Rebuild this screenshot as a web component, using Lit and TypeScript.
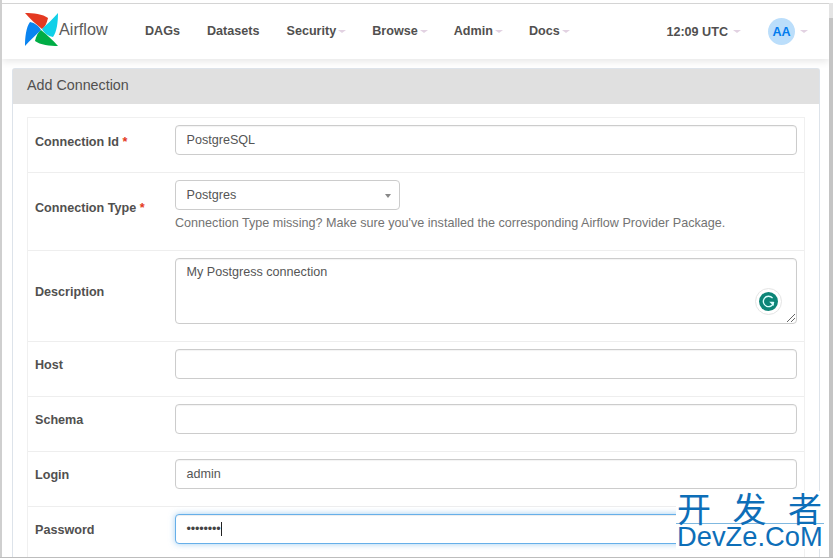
import { LitElement, html, css, svg } from "lit";
import { customElement } from "lit/decorators.js";

const Row = (label: string, req: boolean, body: unknown, cls: string) => html`
  <div class="row ${cls}">
    <div class="lab">${label}${req ? html`<span class="req"> *</span>` : ""}</div>
    <div class="val">${body}</div>
  </div>`;

const Caret = () => html`<span class="caret"></span>`;

@customElement("app-root")
export class AppRoot extends LitElement {
  static styles = css`
    :host { display: block; width: 833px; height: 558px; overflow: hidden; position: relative; background: #fff;
      font-family: "Liberation Sans", Arial, sans-serif; color: #51504f; font-size: 12.6px; }
    * { box-sizing: border-box; }
    .frame { height: 558px; padding: 3px 4px 1px 0; background: #fff; border-left: 2px solid #cfcfcf; display: flex; flex-direction: column; }
    .shell { flex: 1; min-height: 0; border-top: 1px solid #d4d4d4; overflow: hidden; }
    .nav { height: 55px; display: flex; align-items: center; background: #fff; padding-left: 23px; box-shadow: 0 3px 7px rgba(0,0,0,.09); position: relative; z-index: 1; }
    .logo { display: flex; align-items: center; width: 120px; padding-bottom: 4px; }
    .logo svg { display: block; }
    .logo span { font-size: 16.2px; color: #5c5b5a; margin-left: 1px; }
    .menu { display: flex; gap: 27px; font-weight: 700; font-size: 12.6px; color: #51504f; padding-bottom: 2px; }
    .menu div { display: flex; align-items: center; }
    .menu .caret { margin-right: -1px; margin-top: 2px; }
    .caret { display: inline-block; width: 0; height: 0; border-left: 4px solid transparent; border-right: 4px solid transparent; border-top: 3px solid #e2d2e2; margin-left: 2px; }
    .right { display: flex; align-items: center; margin-left: auto; font-weight: 700; font-size: 12.6px; padding-right: 21px; }
    .right .caret { margin-left: 5px; }
    .avatar { width: 27px; height: 27px; border-radius: 50%; background: #bbdefb; color: #017cee; font-size: 12.6px; display: flex; align-items: center; justify-content: center; margin-left: 27px; }
    .right .avatar + .caret { margin-left: 5px; }
    .page { padding: 9px 0 0 10px; background: #fff; }
    .panel { width: 808px; border: 1px solid #dde3ea; border-bottom: 0; border-radius: 3px 3px 0 0; }
    .head { height: 35px; background: #e0e0e0; display: flex; align-items: center; padding: 0 0 3px 14px; font-size: 14.3px; color: #51504f; }
    .table { margin: 13px 0 0 14px; width: 778px; border: 1px solid #f0f0f0; border-bottom: 0; }
    .row { display: flex; border-bottom: 1px solid #eeeeee; }
    .row:last-child { border-bottom: 0; }
    .lab { width: 147px; padding: 15px 0 0 7px; line-height: 16px; font-weight: 700; font-size: 12.6px; color: #51504f; white-space: pre; flex: none; }
    .req { color: #e43921; }
    .val { flex: 1; padding: 7px 7px 0 0; min-width: 0; }
    .r1, .r4, .r5, .r6, .r7 { height: 55px; } .r2 { height: 78px; } .r3 { height: 91px; }
    .r1 .lab { padding-top: 16px; } .r2 .lab { padding-top: 27px; } .r3 .lab { padding-top: 33px; }
    .input { height: 30px; border: 1px solid #ccc; border-radius: 4px; background: #fff; padding: 0 10.5px; display: flex; align-items: center; font-size: 12.6px; color: #555; box-shadow: inset 0 1px 1px rgba(0,0,0,.05); }
    .select { width: 225px; height: 30px; border: 1px solid #ccc; border-radius: 4px; padding: 0 8px 0 10.5px; display: flex; align-items: center; justify-content: space-between; font-size: 12.6px; color: #555; }
    .select i { width: 0; height: 0; border-left: 3px solid transparent; border-right: 3px solid transparent; border-top: 4px solid #888; margin-top: 2px; }
    .help { margin-top: 6px; font-size: 12.6px; color: #737373; white-space: nowrap; }
    .area { position: relative; height: 66px; border: 1px solid #ccc; border-radius: 4px; padding: 6px 10.5px; font-size: 12.6px; color: #555; box-shadow: inset 0 1px 1px rgba(0,0,0,.05); }
    .gram { position: absolute; right: 14px; top: 29px; width: 27px; height: 27px; border-radius: 50%; background: #fff; border: 1px solid #e4e4e4; display: flex; align-items: center; justify-content: center; }
    .grip { position: absolute; right: 0; bottom: 0; }
    .focus { border-color: #66afe9; box-shadow: inset 0 1px 1px rgba(0,0,0,.075), 0 0 6px rgba(102,175,233,.6); }
    .cursor { display: inline-block; width: 1px; height: 14px; background: #222; }
    .dots { font-size: 12.6px; letter-spacing: -.15px; color: #444; }
    .wm { position: absolute; left: 676px; top: 491px; width: 148px; height: 58px; background: #fff; color: #0d6eb8; font-family: "Liberation Sans", sans-serif; z-index: 2; }
    .wm .cn { height: 33px; display: flex; justify-content: space-between; font-family: "Noto Sans CJK SC", sans-serif; font-size: 34px; line-height: 34px; padding: 0 2px 0 1px; border-bottom: 1px solid #7fb8e0; font-weight: 400; }
    .wm .en { font-size: 27.3px; line-height: 26px; white-space: nowrap; padding-left: 1px; }
    .bottom { position: absolute; left: 0; right: 0; bottom: 0; height: 1px; background: #bdbdbd; z-index: 3; }
    .sb { position: absolute; right: 0; top: 3px; bottom: 0; width: 4px; background: linear-gradient(#e4e4e4 0 15px, #c4c4c4 15px); }
  `;

  render() {
    return html`
      <div class="frame"><div class="shell">
        <div class="nav">
          <div class="logo">
            <svg width="33" height="33" viewBox="0 0 33 33">
              ${svg`<path d="M0 0 C8 0 18 1 23 5 C22 10 20 14 17 16 C11 11 5 6 0 0Z" fill="#e43921"/>
              <path d="M33 0 C33 8 32 19 28 24 C23 23 19 20 17 16 C22 11 28 6 33 0Z" fill="#11d0e8"/>
              <path d="M33 33 C25 33 15 32 10 28 C11 23 13 19 16 17 C22 22 28 27 33 33Z" fill="#00ad46"/>
              <path d="M0 33 C0 25 1 14 5 9 C10 10 14 13 16 17 C11 22 5 27 0 33Z" fill="#0a84f0"/>`}
            </svg>
            <span>Airflow</span>
          </div>
          <div class="menu">
            <div>DAGs</div><div>Datasets</div>
            <div>Security${Caret()}</div><div>Browse${Caret()}</div><div>Admin${Caret()}</div><div>Docs${Caret()}</div>
          </div>
          <div class="right">12:09 UTC${Caret()}<div class="avatar">AA</div>${Caret()}</div>
        </div>
        <div class="page"><div class="panel">
          <div class="head">Add Connection</div>
          <div class="table">
            ${Row("Connection Id", true, html`<div class="input">PostgreSQL</div>`, "r1")}
            ${Row("Connection Type", true, html`<div class="select">Postgres<i></i></div><div class="help">Connection Type missing? Make sure you've installed the corresponding Airflow Provider Package.</div>`, "r2")}
            ${Row("Description", false, html`<div class="area">My Postgress connection
              <div class="gram"><svg width="19" height="19" viewBox="0 0 19 19"><circle cx="9.5" cy="9.5" r="9.5" fill="#0c8577"/><path d="M13.6 6.2 A5.2 5.2 0 1 0 14.7 10" fill="none" stroke="#dff" stroke-width="1.3"/><path d="M10.2 9.8 H14.7 V14Z" fill="#dff"/></svg></div>
              <svg class="grip" width="10" height="10" viewBox="0 0 10 10"><path d="M1 9 L9 1 M5 9 L9 5" stroke="#666" stroke-width="1"/></svg>
            </div>`, "r3")}
            ${Row("Host", false, html`<div class="input"></div>`, "r4")}
            ${Row("Schema", false, html`<div class="input"></div>`, "r5")}
            ${Row("Login", false, html`<div class="input">admin</div>`, "r6")}
            ${Row("Password", false, html`<div class="input focus"><span class="dots">••••••••</span><span class="cursor"></span></div>`, "r7")}
          </div>
        </div></div>
      </div></div>
      <div class="sb"></div>
      <div class="bottom"></div>
      <div class="wm"><div class="cn"><span>开</span><span>发</span><span>者</span></div><div class="en">DevZe.CoM</div></div>
    `;
  }
}
